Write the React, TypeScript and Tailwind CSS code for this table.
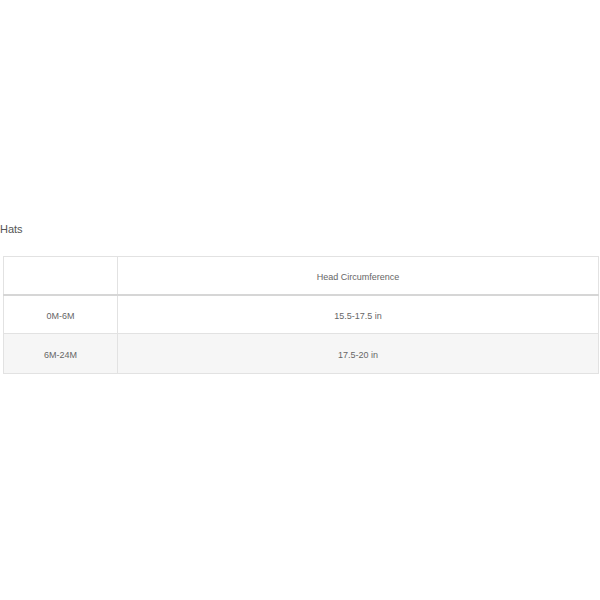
export default function App() {
  const rows = [
    { size: '0M-6M', head: '15.5-17.5 in' },
    { size: '6M-24M', head: '17.5-20 in' },
  ];

  return (
    <div className="w-[600px] h-[600px] bg-white font-['Liberation_Sans',Arial,sans-serif] pt-[221px]">
      <h3 className="text-[11px] leading-[16px] text-[#555] font-normal">Hats</h3>
      <table className="ml-[3px] mt-[19px] w-[596px] border-collapse text-[9px] text-[#666] text-center">
        <thead>
          <tr className="h-[38px] border-b-2 border-[#d6d6d6]">
            <th className="w-[114px] pt-[4px] border border-[#e2e2e2] font-normal"></th>
            <th className="pt-[4px] border border-[#e2e2e2] font-normal">Head Circumference</th>
          </tr>
        </thead>
        <tbody>
          {rows.map((row, i) => (
            <tr key={row.size} className={i % 2 === 1 ? 'h-[40px] bg-[#f6f6f6]' : 'h-[39px] bg-white'}>
              <td className="pt-[4px] border border-[#e2e2e2]">{row.size}</td>
              <td className="pt-[4px] border border-[#e2e2e2]">{row.head}</td>
            </tr>
          ))}
        </tbody>
      </table>
    </div>
  );
}
